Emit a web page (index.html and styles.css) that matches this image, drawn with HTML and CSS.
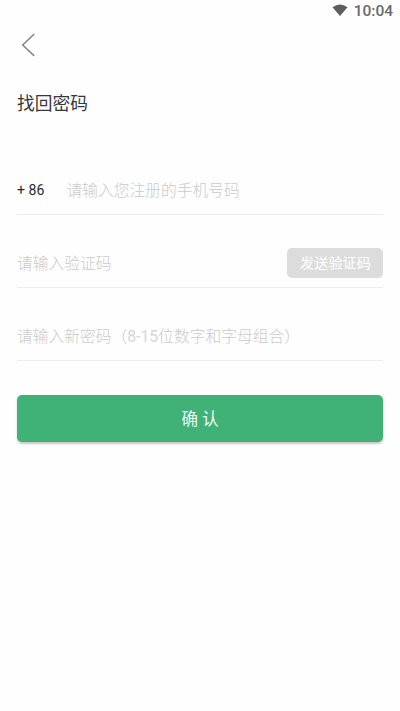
FILE: index.html
```html
<!DOCTYPE html>
<html lang="zh-CN">
<head>
<meta charset="utf-8">
<title>找回密码</title>
<link rel="stylesheet" href="styles.css">
</head>
<body>
<header class="status">
  <svg class="wifi" width="16" height="12" viewBox="0 0 16 12"><path d="M0.5 3.2Q8-2.4 15.5 3.2L8 12Z" fill="#5e5e5e"/></svg>
  <span class="time">10:04</span>
</header>
<nav class="nav">
  <svg width="14" height="24" viewBox="0 0 14 24"><path d="M13.2 1L1.7 12L13.2 22.8" fill="none" stroke="#88888c" stroke-width="1.6"/></svg>
</nav>
<main class="content">
  <h1 class="title">找回密码</h1>
  <form class="form">
    <div class="field">
      <span class="prefix">+ 86</span>
      <span class="hint">请输入您注册的手机号码</span>
    </div>
    <div class="field">
      <span class="hint">请输入验证码</span>
      <button class="send" type="button">发送验证码</button>
    </div>
    <div class="field">
      <span class="hint">请输入新密码（<span class="range">8-15</span>位数字和字母组合）</span>
    </div>
    <button class="submit" type="button">确 认</button>
  </form>
</main>
</body>
</html>
```
FILE: styles.css
```css
* { box-sizing: border-box; }
body {
  margin: 0;
  min-height: 711px;
  background: #fefefe;
  color: #2b2b2b;
  font-family: Roboto, "Noto Sans CJK SC", sans-serif;
}
.status {
  display: flex;
  justify-content: flex-end;
  align-items: center;
  gap: 6px;
  height: 22px;
  padding-right: 7px;
}
.wifi { margin-bottom: 3px; }
.time {
  font-size: 15.5px;
  font-weight: 500;
  line-height: 22px;
  color: #6a6a6a;
}
.nav {
  display: flex;
  align-items: center;
  height: 46px;
  padding-left: 21px;
}
.nav svg { display: block; }
.content { padding: 23px 17px 0; }
.title {
  margin: 0;
  font-size: 17.75px;
  font-weight: 400;
  line-height: 26px;
  color: #383838;
}
.form { margin-top: 25px; }
.field {
  display: flex;
  align-items: center;
  height: 73px;
  padding-top: 23px;
  border-bottom: 1px solid #ececec;
}
.prefix {
  width: 49.5px;
  font-size: 14.1px;
}
.hint {
  padding-top: 2px;
  font-size: 15.75px;
  font-weight: 300;
  line-height: 24px;
  color: #cbcbcb;
  white-space: nowrap;
}
.range {
  font-weight: 400;
  color: #d6d6d6;
}
.send {
  width: 96px;
  height: 30px;
  margin-left: auto;
  padding: 1px 0 0 1px;
  border: 0;
  border-radius: 5px;
  background: #dcdcdc;
  color: #fff;
  font: 400 14.2px/29px Roboto, "Noto Sans CJK SC", sans-serif;
}
.submit {
  display: block;
  width: 100%;
  height: 47px;
  margin-top: 34px;
  padding: 1px 0 0;
  border: 0;
  border-radius: 5px;
  background: #41b277;
  box-shadow: 0 2px 2px rgba(0, 0, 0, 0.22);
  color: #f1faf5;
  font: 400 16.5px/47px Roboto, "Noto Sans CJK SC", sans-serif;
}
```
